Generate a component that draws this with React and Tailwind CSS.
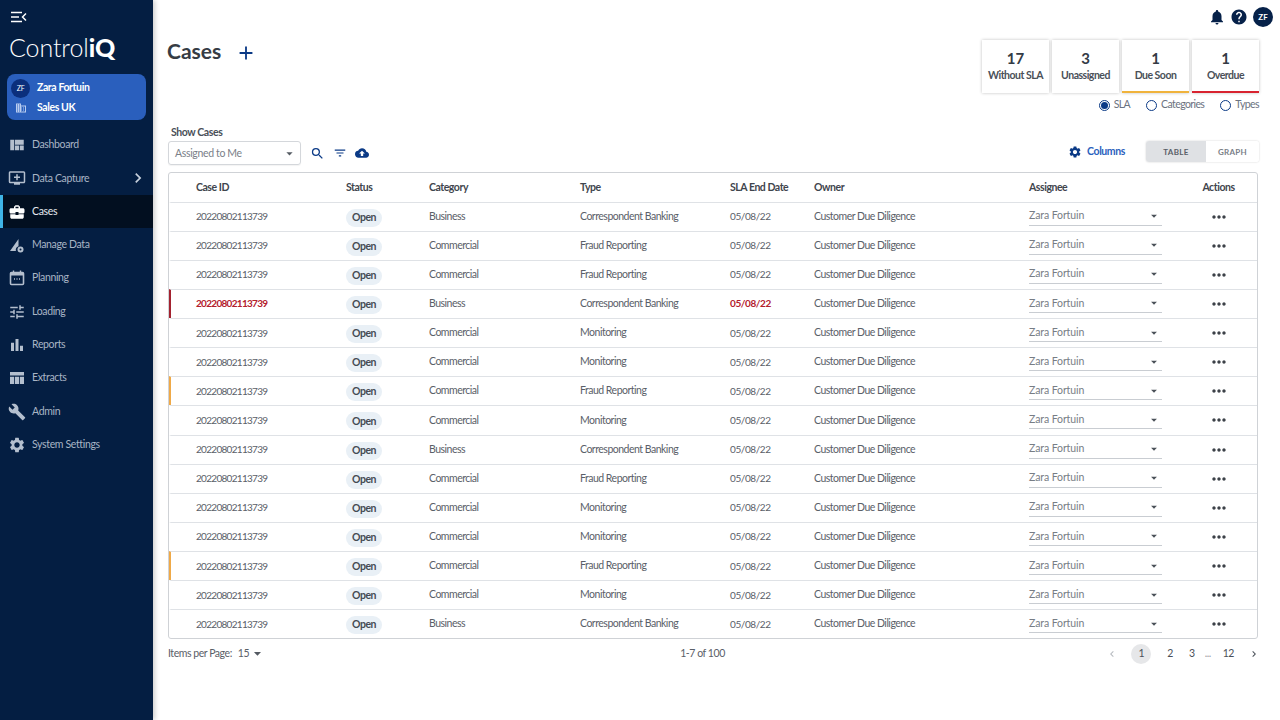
import {
  MdViewQuilt,
  MdAddToQueue,
  MdBusinessCenter,
  MdTune,
  MdBarChart,
  MdBuild,
  MdSettings,
  MdNotifications,
  MdHelp,
  MdSearch,
  MdFilterList,
  MdCloudUpload,
  MdMoreHoriz,
  MdArrowDropDown,
  MdDomain,
  MdAdd,
  MdChevronLeft,
  MdChevronRight,
} from "react-icons/md";

function MenuOpen() {
  return (
    <svg width="16" height="12" viewBox="0 0 16 12" fill="none" stroke="#fff" strokeWidth="1.5">
      <path d="M0 1.5h11M0 6h8M0 10.5h11M15 2.5 11.5 6l3.5 3.5" />
    </svg>
  );
}

function ManageData({ className }) {
  return (
    <svg viewBox="0 0 18 18" className={className} fill="currentColor">
      <path d="M2 15 10.5 3v7.2a4.2 4.2 0 0 0-2.6 4.8z" />
      <circle cx="12.5" cy="13.5" r="3" />
      <circle cx="12.5" cy="13.5" r="1" fill="#041e42" />
    </svg>
  );
}

function PlanningIcon({ className }) {
  return (
    <svg viewBox="0 0 18 18" className={className} fill="none" stroke="currentColor">
      <rect x="2.5" y="3.5" width="13" height="12" rx="1" strokeWidth="1.6" />
      <path d="M2.5 5h13" strokeWidth="3" />
      <path d="M5.5 1.5v3M12.5 1.5v3" strokeWidth="1.4" />
      <path d="M6 10h1M8.5 10h1M11 10h1" strokeWidth="1.3" />
    </svg>
  );
}

function ExtractsIcon({ className }) {
  return (
    <svg viewBox="0 0 18 18" className={className} fill="currentColor">
      <path d="M2 3h14v3.5H2zM2 7.7h4.2V15H2zM7 7.7h4V15H7zM11.8 7.7H16V15h-4.2z" />
    </svg>
  );
}

const nav = [
  { label: "Dashboard", icon: MdViewQuilt },
  { label: "Data Capture", icon: MdAddToQueue, arrow: true },
  { label: "Cases", icon: MdBusinessCenter, active: true },
  { label: "Manage Data", icon: ManageData },
  { label: "Planning", icon: PlanningIcon },
  { label: "Loading", icon: MdTune },
  { label: "Reports", icon: MdBarChart },
  { label: "Extracts", icon: ExtractsIcon },
  { label: "Admin", icon: MdBuild },
  { label: "System Settings", icon: MdSettings },
];

const B = ["Business", "Correspondent Banking"];
const F = ["Commercial", "Fraud Reporting"];
const M = ["Commercial", "Monitoring"];

const rows = [
  { d: B },
  { d: F },
  { d: F },
  { d: B, flag: "red" },
  { d: M },
  { d: M },
  { d: F, flag: "orange" },
  { d: M },
  { d: B },
  { d: F },
  { d: M },
  { d: M },
  { d: F, flag: "orange" },
  { d: M },
  { d: B },
];

const gridCols = "grid grid-cols-[150px_83px_151px_150px_84px_215px_133px_1fr] items-center";

function Sidebar() {
  return (
    <aside className="w-[153px] shrink-0 bg-[#041e42] shadow-[2px_0_5px_rgba(0,0,0,0.2)] flex flex-col">
      <div className="pl-[11px] pt-[11px]">
        <MenuOpen />
      </div>
      <div className="pl-[9px] pt-[7px] text-[25px] leading-[34px] text-white font-light tracking-[-0.1px]">
        Control<span className="font-black">iQ</span>
      </div>
      <div className="mx-[7px] mt-[10px] h-[46px] rounded-lg bg-[#2a5fbd] text-white text-[10.5px] font-bold tracking-[-0.4px] flex flex-col">
        <div className="flex items-center h-[26px] pl-[4px] pt-[2px]">
          <div className="w-[19px] h-[19px] rounded-full bg-[#0b2f7c] text-[7px] font-normal flex items-center justify-center">
            ZF
          </div>
          <span className="ml-[7px]">Zara Fortuin</span>
        </div>
        <div className="flex items-center h-[15px] pl-[8px]">
          <MdDomain className="w-[12px] h-[12px] text-[#b9cdf0]" />
          <span className="ml-[10px]">Sales UK</span>
        </div>
      </div>
      <nav className="mt-[8.5px] flex flex-col">
        {nav.map((n) => {
          const Icon = n.icon;
          return (
            <div
              key={n.label}
              className={
                n.active
                  ? "h-[33.3px] flex items-center pl-[5px] border-l-[3px] border-[#3fb4e6] bg-[#020f20] text-[#e5e9ef]"
                  : "h-[33.3px] flex items-center pl-[8px] pr-[5px] text-[#a9b5c5]"
              }
            >
              <Icon className={n.active ? "w-[18px] h-[18px] text-white" : "w-[18px] h-[18px] text-[#b4bfce]"} />
              <span className="ml-[6px] text-[10.5px] tracking-[-0.35px]">{n.label}</span>
              {n.arrow && <MdChevronRight className="ml-auto w-[20px] h-[20px] text-[#c6cfdb]" />}
            </div>
          );
        })}
      </nav>
    </aside>
  );
}

function StatCard({ value, label, bar }) {
  return (
    <div
      className={`w-[67px] h-[53px] bg-white shadow-[0_0_3px_rgba(0,0,0,0.25)] flex flex-col items-center pt-[10px] text-[#333b45] border-b-2 ${bar}`}
    >
      <div className="text-[15px] leading-[16px] font-bold">{value}</div>
      <div className="mt-[1px] text-[10.5px] leading-[16px] font-bold tracking-[-0.5px] text-[#4a5058] whitespace-nowrap">
        {label}
      </div>
    </div>
  );
}

function Radio({ label, on }) {
  return (
    <div className="flex items-center gap-[4px] text-[10.5px] tracking-[-0.6px] text-[#6b7280]">
      <span className="w-[11px] h-[11px] rounded-full border border-[#0b3a86] flex items-center justify-center">
        {on && <span className="w-[7px] h-[7px] rounded-full bg-[#0b3a86]" />}
      </span>
      {label}
    </div>
  );
}

function Row({ d, flag }) {
  const bar = flag === "red" ? "border-l-[#a3222f]" : flag === "orange" ? "border-l-[#efa948]" : "border-l-transparent";
  const text = flag === "red" ? "text-[#b3202c] font-bold" : "text-[#5a6068]";
  return (
    <div
      className={`${gridCols} h-[29.14px] border-t border-[#dfe2e6] border-l-2 ${bar} pl-[25px] text-[10.5px] tracking-[-0.5px] text-[#5a6068]`}
    >
      <div className={`${text} text-[10px] tracking-[-0.7px]`}>20220802113739</div>
      <div>
        <span className="inline-flex h-[18px] w-[36px] items-center justify-center rounded-full bg-[#e9f0f6] font-bold text-[#454b53] mt-[2px]">
          Open
        </span>
      </div>
      <div>{d[0]}</div>
      <div>{d[1]}</div>
      <div className={`${text} text-[10px] tracking-[-0.4px]`}>05/08/22</div>
      <div>Customer Due Diligence</div>
      <div className="h-[18px] border-b border-[#c9cdd2] flex items-center justify-between text-[#777d85] tracking-[-0.1px]">
        Zara Fortuin
        <MdArrowDropDown className="w-[14px] h-[14px] text-[#4a5058] mr-[1px]" />
      </div>
      <div className="flex justify-center pl-[18px]">
        <MdMoreHoriz className="w-[20px] h-[20px] text-[#3c4148]" />
      </div>
    </div>
  );
}

export default function App() {
  return (
    <div className="flex h-[720px] w-[1280px] overflow-hidden bg-white font-['Lato',sans-serif]">
      <Sidebar />
      <main className="flex-1 flex flex-col min-w-0">
        <div className="h-[33px] flex items-center justify-end pr-[7px]">
          <MdNotifications className="w-[18px] h-[18px] text-[#062149]" />
          <MdHelp className="ml-[4px] w-[18px] h-[18px] text-[#062149]" />
          <div className="ml-[5px] w-[20px] h-[20px] rounded-full bg-[#062149] text-white text-[8px] font-bold flex items-center justify-center">
            ZF
          </div>
        </div>
        <div className="pl-[15px] pr-[21px] flex flex-col flex-1">
          <div className="flex justify-between items-start pt-[7px]">
            <div className="flex items-start mt-[1px] ml-[-1px]">
              <h1 className="-mt-[2px] text-[21px] leading-[24px] font-bold text-[#363c44]">Cases</h1>
              <MdAdd className="ml-[14px] mt-[1px] w-[22px] h-[22px] text-[#0b3a86]" />
            </div>
            <div className="flex flex-col items-end">
              <div className="flex gap-[3px]">
                <StatCard value="17" label="Without SLA" bar="border-transparent" />
                <StatCard value="3" label="Unassigned" bar="border-transparent" />
                <StatCard value="1" label="Due Soon" bar="border-[#f0b33c]" />
                <StatCard value="1" label="Overdue" bar="border-[#d8232f]" />
              </div>
              <div className="flex gap-[16px] mt-[6px] h-[12px]">
                <Radio label="SLA" on />
                <Radio label="Categories" />
                <Radio label="Types" />
              </div>
            </div>
          </div>
          <div className="flex justify-between items-end mt-[14px]">
            <div className="flex items-end">
              <div>
                <div className="pl-[3px] text-[10.5px] tracking-[-0.4px] leading-[14px] font-bold text-[#4a5058]">Show Cases</div>
                <div className="mt-[2px] w-[133px] h-[24px] pt-[1px] rounded-[3px] border border-[#d4d7db] shadow-[0_1px_1px_rgba(0,0,0,0.05)] flex items-center justify-between pl-[6px] pr-[3px] text-[10.5px] tracking-[-0.35px] text-[#7a8088]">
                  Assigned to Me
                  <MdArrowDropDown className="w-[15px] h-[15px] text-[#555b63]" />
                </div>
              </div>
              <div className="flex items-center gap-[8px] h-[24px] ml-[9px] text-[#0b3a86]">
                <MdSearch className="w-[15px] h-[15px]" />
                <MdFilterList className="w-[14px] h-[14px]" />
                <MdCloudUpload className="w-[14px] h-[14px]" />
              </div>
            </div>
            <div className="flex items-center mb-[3px]">
              <MdSettings className="w-[14px] h-[14px] text-[#0b3a86]" />
              <span className="ml-[5px] text-[10.5px] tracking-[-0.4px] font-bold text-[#2a5fbd]">Columns</span>
              <div className="ml-[21px] flex w-[113px] h-[21px] rounded-[3px] shadow-[0_0_2px_rgba(0,0,0,0.2)] text-[8px] font-bold tracking-[0.3px] overflow-hidden">
                <div className="w-[60px] bg-[#dfe1e4] text-[#5a6068] flex items-center justify-center">TABLE</div>
                <div className="flex-1 bg-white text-[#7a8088] flex items-center justify-center">GRAPH</div>
              </div>
            </div>
          </div>
          <div className="mt-[7px] mr-[1px] border border-[#cfd2d6] rounded-[3px] overflow-hidden">
            <div className={`${gridCols} h-[28.5px] pl-[27px] pt-[1px] text-[10.5px] tracking-[-0.45px] font-bold text-[#3f454d]`}>
              <div>Case ID</div>
              <div>Status</div>
              <div>Category</div>
              <div>Type</div>
              <div>SLA End Date</div>
              <div>Owner</div>
              <div>Assignee</div>
              <div className="text-center pl-[18px]">Actions</div>
            </div>
            {rows.map((r, i) => (
              <Row key={i} d={r.d} flag={r.flag} />
            ))}
          </div>
          <div className="flex items-center justify-between h-[29px] text-[10.5px] tracking-[-0.45px] text-[#5a6068]">
            <div className="flex items-center w-[300px]">
              Items per Page:
              <span className="ml-[6px]">15</span>
              <MdArrowDropDown className="w-[17px] h-[17px] text-[#555b63]" />
            </div>
            <div>1-7 of 100</div>
            <div className="flex items-center justify-end w-[322px] text-[#4a5058]">
              <MdChevronLeft className="w-[12px] h-[12px] text-[#b5b9be]" />
              <span className="ml-[13px] w-[20px] h-[20px] rounded-full bg-[#e6e7e9] flex items-center justify-center">1</span>
              <span className="ml-[16px]">2</span>
              <span className="ml-[16px]">3</span>
              <span className="ml-[10px] text-[#9a9ea4]">...</span>
              <span className="ml-[12px]">12</span>
              <MdChevronRight className="ml-[14px] mr-[-1px] w-[12px] h-[12px]" />
            </div>
          </div>
        </div>
      </main>
    </div>
  );
}
